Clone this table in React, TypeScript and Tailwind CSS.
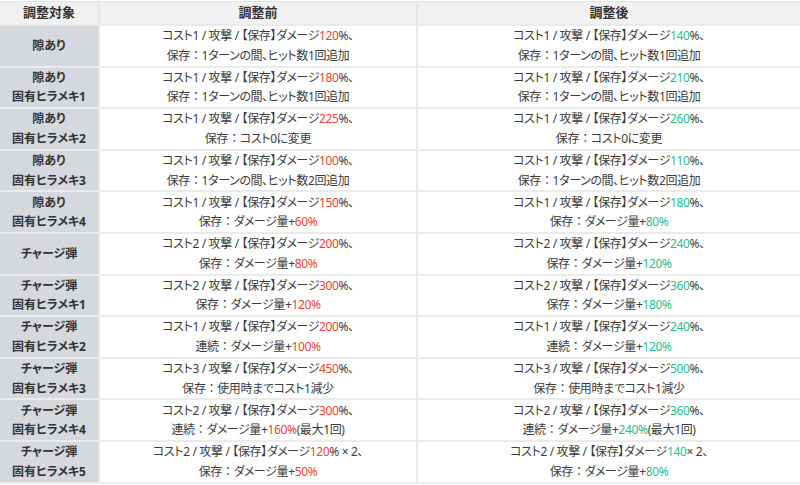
type Part = string | { v: string };

type Row = {
  target: string[];
  before: Part[][];
  after: Part[][];
};

const hi = (v: string) => ({ v });

// full-width colon keeps its width (no proportional spacing)
const COLON = "\uFF1A";

const rows: Row[] = [
  {
    target: ["隙あり"],
    before: [["コスト1 / 攻撃 / 【保存】ダメージ", hi("120"), "%、"], ["保存：1ターンの間、ヒット数1回追加"]],
    after: [["コスト1 / 攻撃 / 【保存】ダメージ", hi("140"), "%、"], ["保存：1ターンの間、ヒット数1回追加"]],
  },
  {
    target: ["隙あり", "固有ヒラメキ1"],
    before: [["コスト1 / 攻撃 / 【保存】ダメージ", hi("180"), "%、"], ["保存：1ターンの間、ヒット数1回追加"]],
    after: [["コスト1 / 攻撃 / 【保存】ダメージ", hi("210"), "%、"], ["保存：1ターンの間、ヒット数1回追加"]],
  },
  {
    target: ["隙あり", "固有ヒラメキ2"],
    before: [["コスト1 / 攻撃 / 【保存】ダメージ", hi("225"), "%、"], ["保存：コスト0に変更"]],
    after: [["コスト1 / 攻撃 / 【保存】ダメージ", hi("260"), "%、"], ["保存：コスト0に変更"]],
  },
  {
    target: ["隙あり", "固有ヒラメキ3"],
    before: [["コスト1 / 攻撃 / 【保存】ダメージ", hi("100"), "%、"], ["保存：1ターンの間、ヒット数2回追加"]],
    after: [["コスト1 / 攻撃 / 【保存】ダメージ", hi("110"), "%、"], ["保存：1ターンの間、ヒット数2回追加"]],
  },
  {
    target: ["隙あり", "固有ヒラメキ4"],
    before: [["コスト1 / 攻撃 / 【保存】ダメージ", hi("150"), "%、"], ["保存：ダメージ量+", hi("60%")]],
    after: [["コスト1 / 攻撃 / 【保存】ダメージ", hi("180"), "%、"], ["保存：ダメージ量+", hi("80%")]],
  },
  {
    target: ["チャージ弾"],
    before: [["コスト2 / 攻撃 / 【保存】ダメージ", hi("200"), "%、"], ["保存：ダメージ量+", hi("80%")]],
    after: [["コスト2 / 攻撃 / 【保存】ダメージ", hi("240"), "%、"], ["保存：ダメージ量+", hi("120%")]],
  },
  {
    target: ["チャージ弾", "固有ヒラメキ1"],
    before: [["コスト2 / 攻撃 / 【保存】ダメージ", hi("300"), "%、"], ["保存：ダメージ量+", hi("120%")]],
    after: [["コスト2 / 攻撃 / 【保存】ダメージ", hi("360"), "%、"], ["保存：ダメージ量+", hi("180%")]],
  },
  {
    target: ["チャージ弾", "固有ヒラメキ2"],
    before: [["コスト1 / 攻撃 / 【保存】ダメージ", hi("200"), "%、"], ["連続：ダメージ量+", hi("100%")]],
    after: [["コスト1 / 攻撃 / 【保存】ダメージ", hi("240"), "%、"], ["連続：ダメージ量+", hi("120%")]],
  },
  {
    target: ["チャージ弾", "固有ヒラメキ3"],
    before: [["コスト3 / 攻撃 / 【保存】ダメージ", hi("450"), "%、"], ["保存：使用時までコスト1減少"]],
    after: [["コスト3 / 攻撃 / 【保存】ダメージ", hi("500"), "%、"], ["保存：使用時までコスト1減少"]],
  },
  {
    target: ["チャージ弾", "固有ヒラメキ4"],
    before: [["コスト2 / 攻撃 / 【保存】ダメージ", hi("300"), "%、"], ["連続：ダメージ量+", hi("160%"), "(最大1回)"]],
    after: [["コスト2 / 攻撃 / 【保存】ダメージ", hi("360"), "%、"], ["連続：ダメージ量+", hi("240%"), "(最大1回)"]],
  },
  {
    target: ["チャージ弾", "固有ヒラメキ5"],
    before: [["コスト2 / 攻撃 / 【保存】ダメージ", hi("120"), "% × 2、"], ["保存：ダメージ量+", hi("50%")]],
    after: [["コスト2 / 攻撃 / 【保存】ダメージ", hi("140"), "× 2、"], ["保存：ダメージ量+", hi("80%")]],
  },
];

// split plain text on the full-width colon so it can keep its full width
const Plain = ({ text }: { text: string }) => {
  const bits = text.split(COLON);
  return (
    <>
      {bits.map((b, i) => (
        <span key={i}>
          {i > 0 && <span className="[font-feature-settings:normal]">{COLON}</span>}
          {b}
        </span>
      ))}
    </>
  );
};

const Lines = ({ lines, color }: { lines: Part[][]; color: string }) => (
  <>
    {lines.map((line, i) => (
      <div key={i}>
        {line.map((p, j) =>
          typeof p === "string" ? (
            <Plain key={j} text={p} />
          ) : (
            <span key={j} className={color}>
              {p.v}
            </span>
          ),
        )}
      </div>
    ))}
  </>
);

export default function App() {
  return (
    <div className="w-[800px] h-[485px] overflow-hidden bg-white pt-px font-['Noto_Sans','Noto_Sans_CJK_JP',sans-serif] text-[12px] leading-[19.5px] text-[#3c3c3c] [font-feature-settings:'palt']">
      <div className="border-b-2 border-[#ebebeb]">
        <div className="grid grid-cols-[100px_318px_1fr] h-[23px] border-t border-[#e4e4e4] bg-[#f1f1f1] text-[13px] font-bold text-[#333]">
          <div className="flex items-center justify-center border-r-2 border-[#e4e4e4]">調整対象</div>
          <div className="flex items-center justify-center border-r-2 border-[#e4e4e4]">調整前</div>
          <div className="flex items-center justify-center">調整後</div>
        </div>
        {rows.map((r, i) => (
          <div
            key={i}
            className="grid grid-cols-[100px_318px_1fr] h-[41.6px] border-t-2 border-[#ebebeb]"
          >
            <div className="flex flex-col items-center justify-center bg-[#d5d8dc] font-bold text-[#333] border-r-2 border-[#e6e6e6]">
              {r.target.map((t) => (
                <div key={t}>{t}</div>
              ))}
            </div>
            <div className="flex flex-col items-center justify-center text-center tracking-[-0.03em] border-r-2 border-[#ebebeb]">
              <Lines lines={r.before} color="text-[#ec4038]" />
            </div>
            <div className="flex flex-col items-center justify-center text-center tracking-[-0.03em]">
              <Lines lines={r.after} color="text-[#22bf90]" />
            </div>
          </div>
        ))}
      </div>
    </div>
  );
}
